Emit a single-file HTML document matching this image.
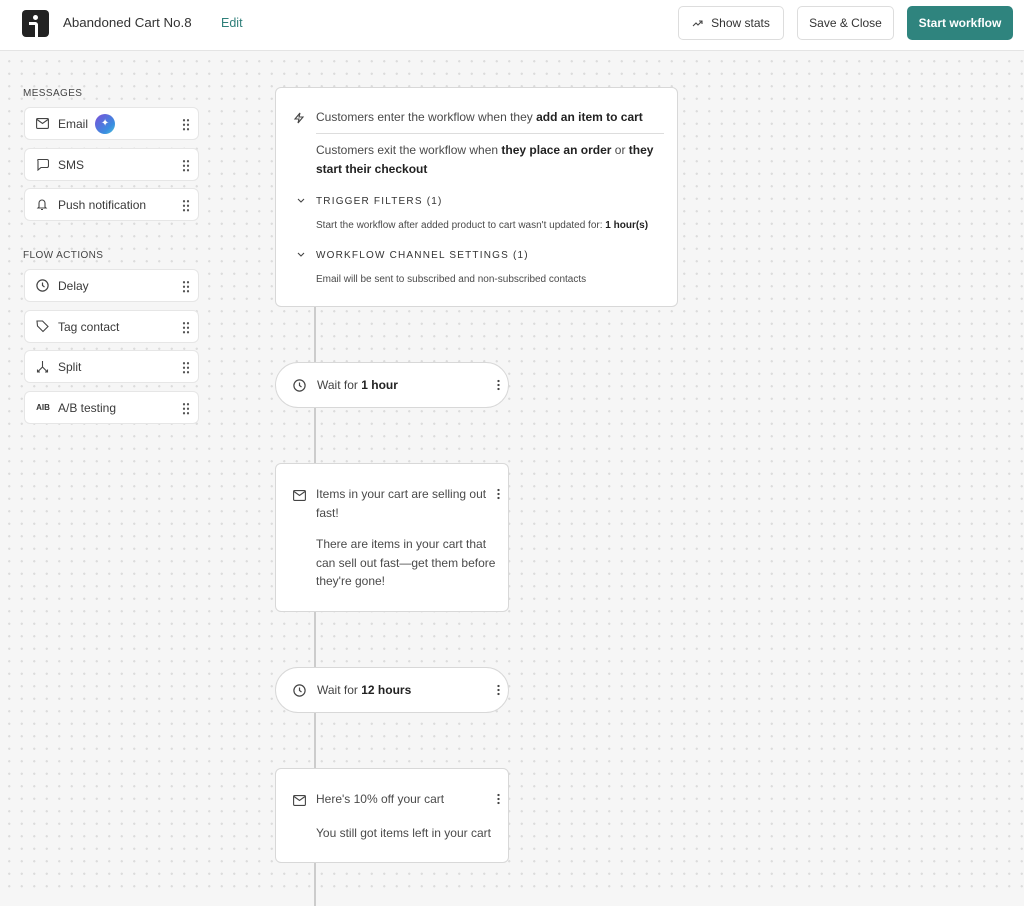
<!DOCTYPE html>
<html><head><meta charset="utf-8"><style>
*{box-sizing:border-box;margin:0;padding:0}
body{width:1024px;height:891px;overflow:hidden;font-family:"Liberation Sans",Arial,sans-serif;color:#333;background:#f6f6f6;position:relative}
.bg{position:absolute;left:0;top:51px;width:1024px;height:840px;background-color:#f6f6f6;background-image:radial-gradient(circle,#dcdcdc 1px,transparent 1.3px);background-size:12.5px 12.5px;background-position:3px 4px}
.hdr{position:absolute;left:0;top:0;width:1024px;height:51px;background:#fff;border-bottom:1px solid #e4e4e4}
.logo{position:absolute;left:22px;top:10px;width:27px;height:27px;background:#222;border-radius:4px}
.title{position:absolute;left:63px;top:15px;font-size:13.3px;color:#333}
.edit{position:absolute;left:221px;top:16px;font-size:12.5px;color:#2f7f7a}
.btn{position:absolute;top:6px;height:34px;border:1px solid #ddd;border-radius:5px;background:#fff;font-size:12px;color:#333;display:flex;align-items:center;justify-content:center;gap:7px}
.btn.p{background:#2f847e;border-color:#2f847e;color:#fff;font-weight:bold}
.lab{position:absolute;left:23px;font-size:10px;letter-spacing:.4px;color:#444}
.item{position:absolute;left:24px;width:175px;height:33px;background:#fff;border:1px solid #e6e6e6;border-radius:6px;font-size:12px;color:#3a3a3a;display:flex;align-items:center;padding-left:10px}
.item .ic{width:14px;height:14px;margin-right:9px;display:flex;align-items:center;justify-content:center}
.grip{position:absolute;right:8px;top:10px;width:8px;height:13px;background-image:radial-gradient(circle,#555 1px,transparent 1.3px);background-size:4px 4.5px}
.line{position:absolute;left:314px;top:306px;width:1.5px;height:600px;background:#ccc}
.card{position:absolute;background:#fff;border:1.5px solid #d8d8d8;border-radius:6px}
.pill{position:absolute;left:275px;width:234px;height:46px;background:#fff;border:1.5px solid #d8d8d8;border-radius:23px;font-size:12px;color:#444;display:flex;align-items:center;padding-left:17px}
.dots{position:absolute;width:3px;height:12px;background-image:radial-gradient(circle,#444 1px,transparent 1.3px);background-size:3px 4px}
.t{font-size:12px;color:#4a4a4a;line-height:18.5px}
b{color:#222}
.sm{font-size:10px;color:#4a4a4a}
.sh{font-size:10px;letter-spacing:1.2px;color:#333}
</style></head><body>
<div class="bg"></div>
<div class="hdr">
 <div class="logo"><div style="position:absolute;left:11px;top:5px;width:5px;height:5px;background:#fff;border-radius:50%"></div><div style="position:absolute;left:7px;top:12px;width:9px;height:15px;border:3px solid #fff;border-left:none;border-bottom:none;border-radius:0 3px 0 0"></div></div>
 <div class="title">Abandoned Cart No.8</div>
 <div class="edit">Edit</div>
 <div class="btn" style="left:678px;width:106px"><svg width="12" height="9" viewBox="0 0 12 9"><path d="M1 7l3-3 2 2 4-4M7 2h3v3" stroke="#444" fill="none" stroke-width="1.1"/></svg>Show stats</div>
 <div class="btn" style="left:797px;width:97px">Save &amp; Close</div>
 <div class="btn p" style="left:907px;width:106px">Start workflow</div>
</div>

<div class="lab" style="top:88px">MESSAGES</div>
<div class="item" style="top:107px"><span class="ic"><svg width="13" height="11"><rect x=".6" y=".6" width="11.8" height="9.8" fill="none" stroke="#444" stroke-width="1.1" rx="1"/><path d="M1 1.5l5.5 4 5.5-4" fill="none" stroke="#444" stroke-width="1.1"/></svg></span>Email<span style="margin-left:7px;width:20px;height:20px;border-radius:50%;background:linear-gradient(135deg,#7a4fd8,#3a8de0 70%,#4fc2d8);color:#fff;font-size:10px;display:flex;align-items:center;justify-content:center">✦</span><span class="grip"></span></div>
<div class="item" style="top:148px"><span class="ic"><svg width="13" height="13"><path d="M2 1.5h9a1.5 1.5 0 0 1 1.5 1.5v5a1.5 1.5 0 0 1-1.5 1.5H5l-3 2.5V3A1.5 1.5 0 0 1 2 1.5z" fill="none" stroke="#444" stroke-width="1.1"/></svg></span>SMS<span class="grip"></span></div>
<div class="item" style="top:188px"><span class="ic"><svg width="12" height="13"><path d="M3 9V5a3 3 0 0 1 6 0v4l1 1H2zM5 11.5h2" fill="none" stroke="#444" stroke-width="1.1"/></svg></span>Push notification<span class="grip"></span></div>

<div class="lab" style="top:250px">FLOW ACTIONS</div>
<div class="item" style="top:269px"><span class="ic"><svg width="13" height="13"><circle cx="6.5" cy="6.5" r="5.6" fill="none" stroke="#444" stroke-width="1.2"/><path d="M6.5 3.5v3l2 1.5" fill="none" stroke="#444" stroke-width="1.2"/></svg></span>Delay<span class="grip"></span></div>
<div class="item" style="top:310px"><span class="ic"><svg width="13" height="13"><path d="M1 1h5.5l5.5 5.5-5 5L1.5 6z" fill="none" stroke="#444" stroke-width="1.1"/></svg></span>Tag contact<span class="grip"></span></div>
<div class="item" style="top:350px"><span class="ic"><svg width="13" height="13"><path d="M6.5 1v6L2 11.5M6.5 7l4.5 4.5M1.5 9.5v2.5h2.5M11.5 9.5v2.5H9" fill="none" stroke="#444" stroke-width="1.1"/></svg></span>Split<span class="grip"></span></div>
<div class="item" style="top:391px"><span class="ic" style="font-size:8px;font-weight:bold;color:#333;width:16px;margin-right:7px">AIB</span>A/B testing<span class="grip"></span></div>

<div class="line"></div>

<div class="card" style="left:275px;top:87px;width:403px;height:220px">
 <svg style="position:absolute;left:17px;top:24px" width="12" height="12"><path d="M7 1L2 7h4l-1 4 5-6H6z" fill="none" stroke="#444" stroke-width="1.1"/></svg>
 <div class="t" style="position:absolute;left:40px;top:20px">Customers enter the workflow when they <b>add an item to cart</b></div>
 <div style="position:absolute;left:40px;top:45px;width:348px;height:1px;background:#ddd"></div>
 <div class="t" style="position:absolute;left:40px;top:53px;width:340px">Customers exit the workflow when <b>they place an order</b> or <b>they start their checkout</b></div>
 <svg style="position:absolute;left:21px;top:110px" width="8" height="5"><path d="M1 1l3 3 3-3" fill="none" stroke="#444" stroke-width="1.1"/></svg>
 <div class="sh" style="position:absolute;left:40px;top:108px">TRIGGER FILTERS (1)</div>
 <div class="sm" style="position:absolute;left:40px;top:132px">Start the workflow after added product to cart wasn't updated for: <b>1 hour(s)</b></div>
 <svg style="position:absolute;left:21px;top:164px" width="8" height="5"><path d="M1 1l3 3 3-3" fill="none" stroke="#444" stroke-width="1.1"/></svg>
 <div class="sh" style="position:absolute;left:40px;top:162px">WORKFLOW CHANNEL SETTINGS (1)</div>
 <div class="sm" style="position:absolute;left:40px;top:186px">Email will be sent to subscribed and non-subscribed contacts</div>
</div>

<div class="pill" style="top:362px"><svg width="13" height="13" style="margin-right:11px"><circle cx="6.5" cy="6.5" r="5.6" fill="none" stroke="#444" stroke-width="1.2"/><path d="M6.5 3.5v3l2 1.5" fill="none" stroke="#444" stroke-width="1.2"/></svg>Wait for&nbsp;<b>1 hour</b><span class="dots" style="left:221px;top:16px"></span></div>

<div class="card" style="left:275px;top:463px;width:234px;height:149px">
 <svg style="position:absolute;left:17px;top:26px" width="13" height="11"><rect x=".6" y=".6" width="11.8" height="9.8" fill="none" stroke="#444" stroke-width="1.1" rx="1"/><path d="M1 1.5l5.5 4 5.5-4" fill="none" stroke="#444" stroke-width="1.1"/></svg>
 <div class="t" style="position:absolute;left:40px;top:21px;width:180px">Items in your cart are selling out fast!</div>
 <div class="t" style="position:absolute;left:40px;top:71px;width:185px">There are items in your cart that can sell out fast—get them before they're gone!</div>
 <span class="dots" style="left:221px;top:24px"></span>
</div>

<div class="pill" style="top:667px"><svg width="13" height="13" style="margin-right:11px"><circle cx="6.5" cy="6.5" r="5.6" fill="none" stroke="#444" stroke-width="1.2"/><path d="M6.5 3.5v3l2 1.5" fill="none" stroke="#444" stroke-width="1.2"/></svg>Wait for&nbsp;<b>12 hours</b><span class="dots" style="left:221px;top:16px"></span></div>

<div class="card" style="left:275px;top:768px;width:234px;height:95px">
 <svg style="position:absolute;left:17px;top:26px" width="13" height="11"><rect x=".6" y=".6" width="11.8" height="9.8" fill="none" stroke="#444" stroke-width="1.1" rx="1"/><path d="M1 1.5l5.5 4 5.5-4" fill="none" stroke="#444" stroke-width="1.1"/></svg>
 <div class="t" style="position:absolute;left:40px;top:21px">Here's 10% off your cart</div>
 <div class="t" style="position:absolute;left:40px;top:55px">You still got items left in your cart</div>
 <span class="dots" style="left:221px;top:24px"></span>
</div>
</body></html>
